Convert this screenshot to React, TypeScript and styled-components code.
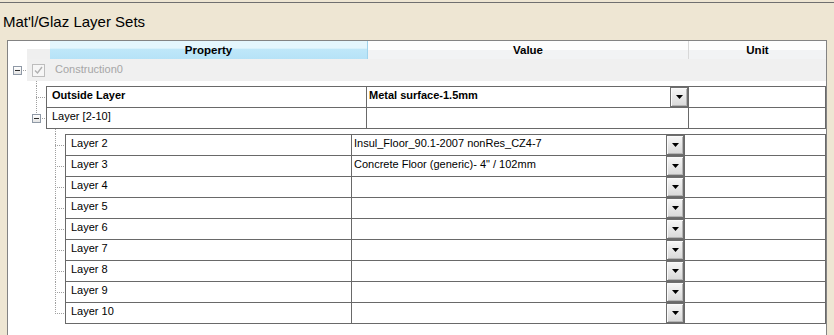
import * as React from 'react';
import { FC } from 'react';
import styled, { createGlobalStyle, css } from 'styled-components';

const GlobalStyle = createGlobalStyle`
  html, body {
    margin: 0;
    padding: 0;
    background: #eee6d3;
    overflow: hidden;
  }

  body {
    font-family: "Liberation Sans", Arial, sans-serif;
    color: #000;
  }
`;

const dotV = 'repeating-linear-gradient(to bottom, #a0a0a0 0 1px, transparent 1px 2px)';
const dotH = 'repeating-linear-gradient(to right, #a0a0a0 0 1px, transparent 1px 2px)';

const Panel = styled.div`
  margin-top: 2px;
  border-top: 1px solid #6f6f6f;
  height: 333px;
  box-sizing: border-box;
  padding-top: 10px;
  overflow: hidden;
`;

const Title = styled.div`
  padding-left: 3px;
  font-size: 15px;
  line-height: 17px;
`;

const Grid = styled.div`
  margin: 10px 0 0 7px;
  width: 818px;
  height: 300px;
  border: 1px solid #838383;
  background: #fff;
`;

const HeaderRow = styled.div`
  display: grid;
  grid-template-columns: 19px 23px 318px 321px 1fr;
  height: 18px;
`;

const HeaderBlank = styled.div`
  background: #fff;
`;

const HeaderCorner = styled.div`
  background: linear-gradient( #fff 0 8px, #efefef 8px );
`;

const HeaderCell = styled.div<{ $active?: boolean }>`
  box-sizing: border-box;
  text-align: center;
  font-size: 11.5px;
  font-weight: bold;
  line-height: 18px;
  border-right: 1px solid #d8d8d8;
  border-bottom: 1px solid #d5d5d5;
  background: linear-gradient( #fdfdfd 0 50%, #f2f3f4 50% );

  ${ p => p.$active && css`
    border-right-color: #9fd3ec;
    border-bottom-color: #9fd3ec;
    background: linear-gradient( #e4f6fd 0 40%, #bfe7f9 45%, #b6e2f7 100% );
  ` }

  &:last-child {
    border-right: none;
  }
`;

const TreeRow = styled.div`
  display: flex;
`;

const Children = styled.div`
  margin-left: 19px;
`;

type Line = 'full' | 'top' | 'none';

const Gutter = styled.div<{ $v: Line; $h?: boolean; $height?: number }>`
  flex: 0 0 19px;
  box-sizing: border-box;
  display: flex;
  align-items: center;
  padding-left: 5px;
  ${ p => p.$height && css`height: ${ p.$height }px;` }
  background-repeat: no-repeat;
  background-image: ${ p => [
        p.$v !== 'none' ? dotV : null,
        p.$h ? dotH : null,
    ].filter( Boolean ).join( ', ' ) || 'none' };
  background-position: ${ p => [
        p.$v !== 'none' ? '9px 0' : null,
        p.$h ? '9px 50%' : null,
    ].filter( Boolean ).join( ', ' ) || '0 0' };
  background-size: ${ p => [
        p.$v === 'full' ? '1px 100%' : p.$v === 'top' ? '1px 50%' : null,
        p.$h ? '10px 1px' : null,
    ].filter( Boolean ).join( ', ' ) || 'auto' };
`;

const Expander = styled.div`
  position: relative;
  width: 9px;
  height: 9px;
  box-sizing: border-box;
  border: 1px solid #8f99a6;
  background: linear-gradient( #ffffff, #e4e4e4 );

  &::after {
    content: "";
    position: absolute;
    left: 1px;
    top: 3px;
    width: 5px;
    height: 1px;
    background: #2c2c2c;
  }
`;

const RootBand = styled.div`
  flex: 1;
  height: 22px;
  display: flex;
  align-items: center;
  padding-left: 5px;
  background: #f0f0f0;
`;

const CheckBox = styled.div`
  width: 13px;
  height: 13px;
  box-sizing: border-box;
  border: 1px solid #bdbdbd;
  background: #f6f6f6;
  display: flex;
  align-items: center;
  justify-content: center;
`;

const RootLabel = styled.span`
  margin-left: 10px;
  font-size: 11px;
  line-height: 17px;
  padding-bottom: 2px;
  color: #a6a6a6;
`;

const TableRow = styled.div<{ $cols: string; $first?: boolean }>`
  flex: 1;
  display: grid;
  grid-template-columns: ${ p => p.$cols };
  height: 21px;
  box-sizing: border-box;
  border: 1px solid #696969;
  border-top: ${ p => p.$first ? '1px solid #696969' : 'none' };
  ${ p => p.$first && css`height: 22px;` }
`;

const Cell = styled.div<{ $bold?: boolean; $pad?: number }>`
  display: flex;
  min-width: 0;
  border-right: 1px solid #696969;
  padding-left: ${ p => p.$pad ?? 5 }px;
  font-size: 11px;
  line-height: 17px;
  font-weight: ${ p => p.$bold ? 'bold' : 'normal' };
  white-space: nowrap;

  &:last-child {
    border-right: none;
  }
`;

const CellText = styled.span`
  flex: 1;
  overflow: hidden;
`;

const DropButton = styled.div`
  flex: 0 0 18px;
  height: 20px;
  box-sizing: border-box;
  border: 1px solid #6e6e6e;
  box-shadow: inset 1px 1px 0 #fafafa, inset -1px -1px 0 #b4b4b4;
  background: linear-gradient( #f7f7f7, #d9d9d9 );
  display: flex;
  align-items: center;
  justify-content: center;
`;

const Dropdown: FC = () => (
    <DropButton>
        <svg width="7" height="4" viewBox="0 0 7 4">
            <polygon points="0,0 7,0 3.5,4" fill="#000"/>
        </svg>
    </DropButton>
);

const OUTER_COLS = '320px 322px 1fr';
const INNER_COLS = '286px 333px 1fr';

const layers = [
    { name: 'Layer 2', value: 'Insul_Floor_90.1-2007 nonRes_CZ4-7' },
    { name: 'Layer 3', value: 'Concrete Floor (generic)- 4" / 102mm' },
    { name: 'Layer 4', value: '' },
    { name: 'Layer 5', value: '' },
    { name: 'Layer 6', value: '' },
    { name: 'Layer 7', value: '' },
    { name: 'Layer 8', value: '' },
    { name: 'Layer 9', value: '' },
    { name: 'Layer 10', value: '' },
];

const App: FC = () =>
{
    return (
        <>
            <GlobalStyle/>
            <Panel>
                <Title>Mat'l/Glaz Layer Sets</Title>
                <Grid>
                    <HeaderRow>
                        <HeaderBlank/>
                        <HeaderCorner/>
                        <HeaderCell $active>Property</HeaderCell>
                        <HeaderCell>Value</HeaderCell>
                        <HeaderCell>Unit</HeaderCell>
                    </HeaderRow>

                    <TreeRow>
                        <Gutter $v="none" $h><Expander/></Gutter>
                        <RootBand>
                            <CheckBox>
                                <svg width="9" height="9" viewBox="0 0 9 9">
                                    <path d="M1 4.5 L3.5 7 L8 1" fill="none" stroke="#b0b0b0" strokeWidth="1.4"/>
                                </svg>
                            </CheckBox>
                            <RootLabel>Construction0</RootLabel>
                        </RootBand>
                    </TreeRow>

                    <Children>
                        <Gutter $v="full" $height={ 5 }/>
                        <TreeRow>
                            <Gutter $v="full" $h/>
                            <TableRow $cols={ OUTER_COLS } $first>
                                <Cell $bold><CellText>Outside Layer</CellText></Cell>
                                <Cell $bold $pad={ 2 }>
                                    <CellText>Metal surface-1.5mm</CellText>
                                    <Dropdown/>
                                </Cell>
                                <Cell/>
                            </TableRow>
                        </TreeRow>
                        <TreeRow>
                            <Gutter $v="top" $h><Expander/></Gutter>
                            <TableRow $cols={ OUTER_COLS }>
                                <Cell><CellText>Layer [2-10]</CellText></Cell>
                                <Cell/>
                                <Cell/>
                            </TableRow>
                        </TreeRow>

                        <Children>
                            <Gutter $v="full" $height={ 5 }/>
                            { layers.map( ( layer, i ) => (
                                <TreeRow key={ layer.name }>
                                    <Gutter $v={ i === layers.length - 1 ? 'top' : 'full' } $h/>
                                    <TableRow $cols={ INNER_COLS } $first={ i === 0 }>
                                        <Cell><CellText>{ layer.name }</CellText></Cell>
                                        <Cell $pad={ 2 }>
                                            <CellText>{ layer.value }</CellText>
                                            <Dropdown/>
                                        </Cell>
                                        <Cell/>
                                    </TableRow>
                                </TreeRow>
                            ) ) }
                        </Children>
                    </Children>
                </Grid>
            </Panel>
        </>
    );
};

export default App;
